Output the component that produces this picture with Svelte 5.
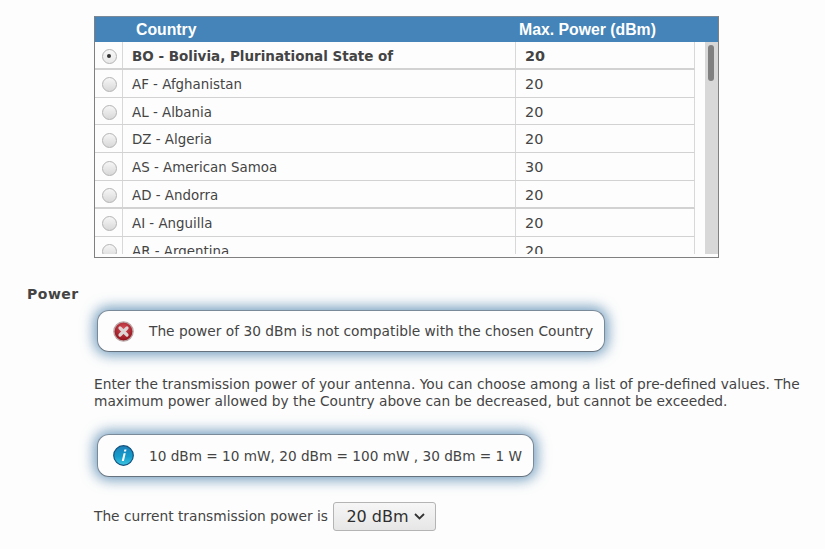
<script>
  const countries = [
    { name: 'BO - Bolivia, Plurinational State of', power: 20, selected: true, thick: true },
    { name: 'AF - Afghanistan', power: 20 },
    { name: 'AL - Albania', power: 20 },
    { name: 'DZ - Algeria', power: 20 },
    { name: 'AS - American Samoa', power: 30 },
    { name: 'AD - Andorra', power: 20, thick: true },
    { name: 'AI - Anguilla', power: 20 },
    { name: 'AR - Argentina', power: 20 }
  ];
</script>

<div class="page">
  <div class="table">
    <div class="table-head">
      <span class="head-country">Country</span>
      <span class="head-power">Max. Power (dBm)</span>
    </div>
    <div class="table-body">
      <div class="rows">
        {#each countries as c}
          <div class="row" class:selected={c.selected} class:thick={c.thick}>
            <div class="cell-radio"><span class="radio"></span></div>
            <div class="cell-name">{c.name}</div>
            <div class="cell-power">{c.power}</div>
          </div>
        {/each}
      </div>
      <div class="scrollbar"><div class="thumb"></div></div>
    </div>
  </div>

  <div class="section-label">Power</div>

  <div class="message error">
    <svg class="msg-icon" width="21" height="21" viewBox="0 0 21 21">
      <defs>
        <radialGradient id="redball" cx="50%" cy="35%" r="65%">
          <stop offset="0" stop-color="#d8505a" />
          <stop offset="1" stop-color="#8e0f18" />
        </radialGradient>
      </defs>
      <circle cx="10.5" cy="10.5" r="9.6" fill="url(#redball)" stroke="#b9a6a6" stroke-width="1.4" />
      <path d="M7 7l7 7M14 7l-7 7" stroke="#ddd6d6" stroke-width="3.2" stroke-linecap="round" />
    </svg>
    <span>The power of 30 dBm is not compatible with the chosen Country</span>
  </div>

  <p class="help">Enter the transmission power of your antenna. You can choose among a list of pre-defined values. The maximum power allowed by the Country above can be decreased, but cannot be exceeded.</p>

  <div class="message info">
    <svg class="msg-icon" width="21" height="21" viewBox="0 0 21 21">
      <defs>
        <linearGradient id="blueball" x1="0" y1="0" x2="0" y2="1">
          <stop offset="0" stop-color="#1c7fb8" />
          <stop offset="0.55" stop-color="#139ccb" />
          <stop offset="1" stop-color="#3fc4e2" />
        </linearGradient>
      </defs>
      <circle cx="10.5" cy="10.5" r="9.8" fill="url(#blueball)" stroke="#14527e" stroke-width="1.2" />
      <path d="M11.4 4.6h2.1l-.5 2h-2.1zM10.6 8.2h2.1L10.9 16H8.8z" fill="#fff" />
    </svg>
    <span>10 dBm = 10 mW, 20 dBm = 100 mW , 30 dBm = 1 W</span>
  </div>

  <div class="current">
    <span class="current-label">The current transmission power is</span>
    <button class="select">
      <span>20 dBm</span>
      <svg width="11" height="7" viewBox="0 0 11 7"><path d="M1 1l4.5 4.5L10 1" fill="none" stroke="#333" stroke-width="1.8" /></svg>
    </button>
  </div>
</div>

<style>
  :global(body) {
    margin: 0;
    background: #fdfdfd;
  }
  .page {
    width: 825px;
    height: 549px;
    overflow: hidden;
    box-sizing: border-box;
    padding: 16px 0 0 94px;
    font-family: "DejaVu Sans", sans-serif;
    font-size: 13.4px;
    color: #444;
  }
  .table {
    width: 625px;
    height: 242px;
    box-sizing: border-box;
    border: 1px solid #808080;
    border-top-color: #7b8a98;
    display: flex;
    flex-direction: column;
  }
  .table-head {
    height: 25px;
    flex: none;
    background: #4484b8;
    color: #fff;
    font-family: "Liberation Sans", sans-serif;
    font-weight: bold;
    font-size: 15.8px;
    display: flex;
    align-items: center;
  }
  .head-country {
    margin-left: 41px;
    width: 383px;
  }
  .table-body {
    flex: 1;
    min-height: 0;
    display: flex;
    justify-content: space-between;
    padding-bottom: 3px;
  }
  .rows {
    width: 600px;
    flex: none;
    overflow: hidden;
  }
  .row {
    display: flex;
    height: 27.8px;
    box-sizing: border-box;
    border-bottom: 1px solid #d2d2d2;
    align-items: stretch;
    line-height: 29px;
    border-right: 1px solid #d8d8d8;
  }
  .row.thick {
    border-bottom: 2px solid #d2d2d2;
  }
  .row.selected {
    font-weight: bold;
    font-size: 13.5px;
  }
  .cell-radio {
    width: 27px;
    flex: none;
    border-right: 1px solid #d8d8d8;
    display: flex;
    align-items: center;
    justify-content: center;
  }
  .cell-name {
    width: 393px;
    flex: none;
    box-sizing: border-box;
    padding-left: 9px;
    border-right: 1px solid #d8d8d8;
  }
  .cell-power {
    padding-left: 9px;
    font-size: 14.4px;
  }
  .radio {
    width: 13px;
    height: 13px;
    margin: 3px 0 0 1px;
    border-radius: 50%;
    border: 1px solid #b4b4b4;
    background: linear-gradient(#f6f6f6, #d8d8d8);
    position: relative;
  }
  .selected .radio {
    background: linear-gradient(#f8f8f8, #e8e8e8);
  }
  .selected .radio::after {
    content: "";
    position: absolute;
    left: 4.5px;
    top: 4.5px;
    width: 4px;
    height: 4px;
    border-radius: 50%;
    background: #333;
  }
  .scrollbar {
    width: 13px;
    flex: none;
    background: #d8d8d8;
    padding: 3px 3px;
    box-sizing: border-box;
  }
  .thumb {
    height: 36px;
    width: 6px;
    border-radius: 3px;
    background: #808080;
  }
  .section-label {
    margin: 28px 0 0 -67px;
    font-weight: bold;
    font-size: 14px;
    letter-spacing: 0.5px;
    line-height: 16px;
    color: #444;
  }
  .message {
    width: fit-content;
    box-sizing: border-box;
    height: 42px;
    margin-left: 3px;
    padding: 0 11px 0 15px;
    background: #fdfdfd;
    border-radius: 12px;
    border: 1px solid #7b8a98;
    border-bottom-color: #66727e;
    box-shadow: 0 0 13px 3px rgba(70, 125, 170, 0.75);
    display: flex;
    align-items: center;
    gap: 15px;
    font-size: 13.75px;
  }
  .error {
    margin-top: 8px;
  }
  .info {
    margin-top: 24px;
    height: 43px;
    font-size: 13.65px;
  }
  .msg-icon {
    flex: none;
  }
  .help {
    margin: 24px 0 0;
    width: 722px;
    font-size: 13.75px;
    line-height: 17px;
  }
  .current {
    margin-top: 25px;
    display: flex;
    align-items: center;
    gap: 5px;
    font-size: 13.75px;
  }
  .current-label {
    margin-bottom: 2px;
  }
  .select {
    width: 103px;
    height: 29px;
    border: 1px solid #b4b4b4;
    border-radius: 3px;
    background: linear-gradient(#f6f6f6, #e6e6e6);
    font-family: "DejaVu Sans", sans-serif;
    font-size: 16px;
    color: #2e2e2e;
    display: flex;
    align-items: center;
    justify-content: center;
    gap: 5px;
    padding: 0 0 0 2px;
  }
</style>
